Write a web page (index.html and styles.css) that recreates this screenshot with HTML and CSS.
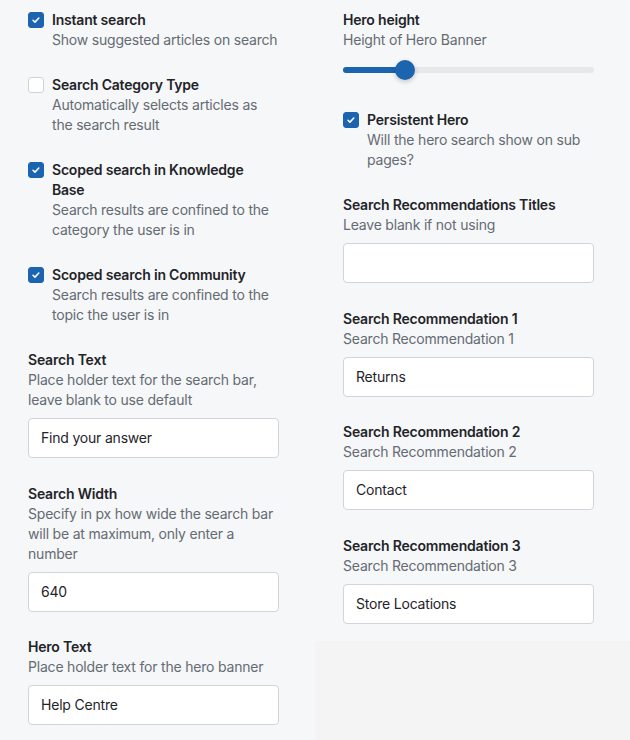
FILE: index.html
```html
<!DOCTYPE html>
<html>
<head>
<meta charset="utf-8">
<link rel="stylesheet" href="styles.css">
</head>
<body>
<div class="page">
  <div class="col">
    <div class="item check">
      <span class="box on"><svg viewBox="0 0 16 16"><path d="M4.6 8.3l2.2 2.1 4.4-4.6" fill="none" stroke="#fff" stroke-width="1.8" stroke-linecap="round" stroke-linejoin="round"/></svg></span>
      <div class="txt"><div class="title">Instant search</div><div class="desc">Show suggested articles on search</div></div>
    </div>
    <div class="item check">
      <span class="box"></span>
      <div class="txt"><div class="title">Search Category Type</div><div class="desc">Automatically selects articles as the search result</div></div>
    </div>
    <div class="item check">
      <span class="box on"><svg viewBox="0 0 16 16"><path d="M4.6 8.3l2.2 2.1 4.4-4.6" fill="none" stroke="#fff" stroke-width="1.8" stroke-linecap="round" stroke-linejoin="round"/></svg></span>
      <div class="txt"><div class="title">Scoped search in Knowledge Base</div><div class="desc">Search results are confined to the category the user is in</div></div>
    </div>
    <div class="item check">
      <span class="box on"><svg viewBox="0 0 16 16"><path d="M4.6 8.3l2.2 2.1 4.4-4.6" fill="none" stroke="#fff" stroke-width="1.8" stroke-linecap="round" stroke-linejoin="round"/></svg></span>
      <div class="txt"><div class="title">Scoped search in Community</div><div class="desc">Search results are confined to the topic the user is in</div></div>
    </div>
    <div class="item field">
      <div class="title">Search Text</div>
      <div class="desc">Place holder text for the search bar, leave blank to use default</div>
      <div class="input">Find your answer</div>
    </div>
    <div class="item field">
      <div class="title">Search Width</div>
      <div class="desc">Specify in px how wide the search bar will be at maximum, only enter a number</div>
      <div class="input">640</div>
    </div>
    <div class="item field">
      <div class="title">Hero Text</div>
      <div class="desc">Place holder text for the hero banner</div>
      <div class="input">Help Centre</div>
    </div>
  </div>
  <div class="col right">
    <div class="item">
      <div class="title">Hero height</div>
      <div class="desc">Height of Hero Banner</div>
      <div class="slider"><div class="track"><div class="fill"></div><div class="thumb"></div></div></div>
    </div>
    <div class="item check">
      <span class="box on"><svg viewBox="0 0 16 16"><path d="M4.6 8.3l2.2 2.1 4.4-4.6" fill="none" stroke="#fff" stroke-width="1.8" stroke-linecap="round" stroke-linejoin="round"/></svg></span>
      <div class="txt"><div class="title">Persistent Hero</div><div class="desc">Will the hero search show on sub pages?</div></div>
    </div>
    <div class="item field">
      <div class="title">Search Recommendations Titles</div>
      <div class="desc">Leave blank if not using</div>
      <div class="input"></div>
    </div>
    <div class="item field">
      <div class="title">Search Recommendation 1</div>
      <div class="desc">Search Recommendation 1</div>
      <div class="input">Returns</div>
    </div>
    <div class="item field">
      <div class="title">Search Recommendation 2</div>
      <div class="desc">Search Recommendation 2</div>
      <div class="input">Contact</div>
    </div>
    <div class="item field">
      <div class="title">Search Recommendation 3</div>
      <div class="desc">Search Recommendation 3</div>
      <div class="input">Store Locations</div>
    </div>
  </div>
</div>
</body>
</html>
```
FILE: styles.css
```css
html, body {
  margin: 0;
  padding: 0;
  background: #f4f4f4;
  height: 740px;
  overflow: hidden;
}
body {
  font-family: Inter, "Noto Sans", sans-serif;
  font-size: 14px;
  line-height: 20px;
  letter-spacing: -0.2px;
  color: #1f2429;
}
.page {
  display: grid;
  grid-template-columns: 315px 315px;
  align-items: start;
}
.col {
  background: #f6f7f8;
  padding: 10px 36px 17px 28px;
  display: flex;
  flex-direction: column;
  gap: 25px;
  min-height: 740px;
  box-sizing: border-box;
}
.col.right {
  min-height: 0;
}
.item.field {
  margin-bottom: 0.5px;
}
.title {
  font-weight: 600;
  color: #1f2429;
}
.desc {
  color: #646b73;
}
.check {
  display: flex;
  gap: 8px;
  align-items: flex-start;
}
.box {
  flex: none;
  width: 16px;
  height: 16px;
  margin-top: 2px;
  box-sizing: border-box;
  border-radius: 3px;
  background: #fff;
  border: 1px solid #cfd3d7;
  display: flex;
}
.box.on {
  background: #1c63b0;
  border-color: #1c63b0;
}
.box svg {
  width: 14px;
  height: 14px;
}
.input {
  margin-top: 8px;
  height: 40px;
  box-sizing: border-box;
  background: #fff;
  border: 1px solid #d1d5d9;
  border-radius: 4px;
  padding: 9px 12px;
  color: #1f2429;
}
.slider {
  padding: 10px 0 5px;
}
.track {
  position: relative;
  height: 20px;
}
.track::before {
  content: "";
  position: absolute;
  left: 0;
  right: 0;
  top: 7px;
  height: 6px;
  border-radius: 3px;
  background: #e6e8ea;
}
.fill {
  position: absolute;
  left: 0;
  top: 7px;
  height: 6px;
  width: 62px;
  border-radius: 3px;
  background: #1c63b0;
}
.thumb {
  position: absolute;
  left: 52px;
  top: 0;
  width: 20px;
  height: 20px;
  border-radius: 50%;
  background: #1c63b0;
  box-shadow: 0 2px 5px rgba(0,0,0,0.2);
}
```
